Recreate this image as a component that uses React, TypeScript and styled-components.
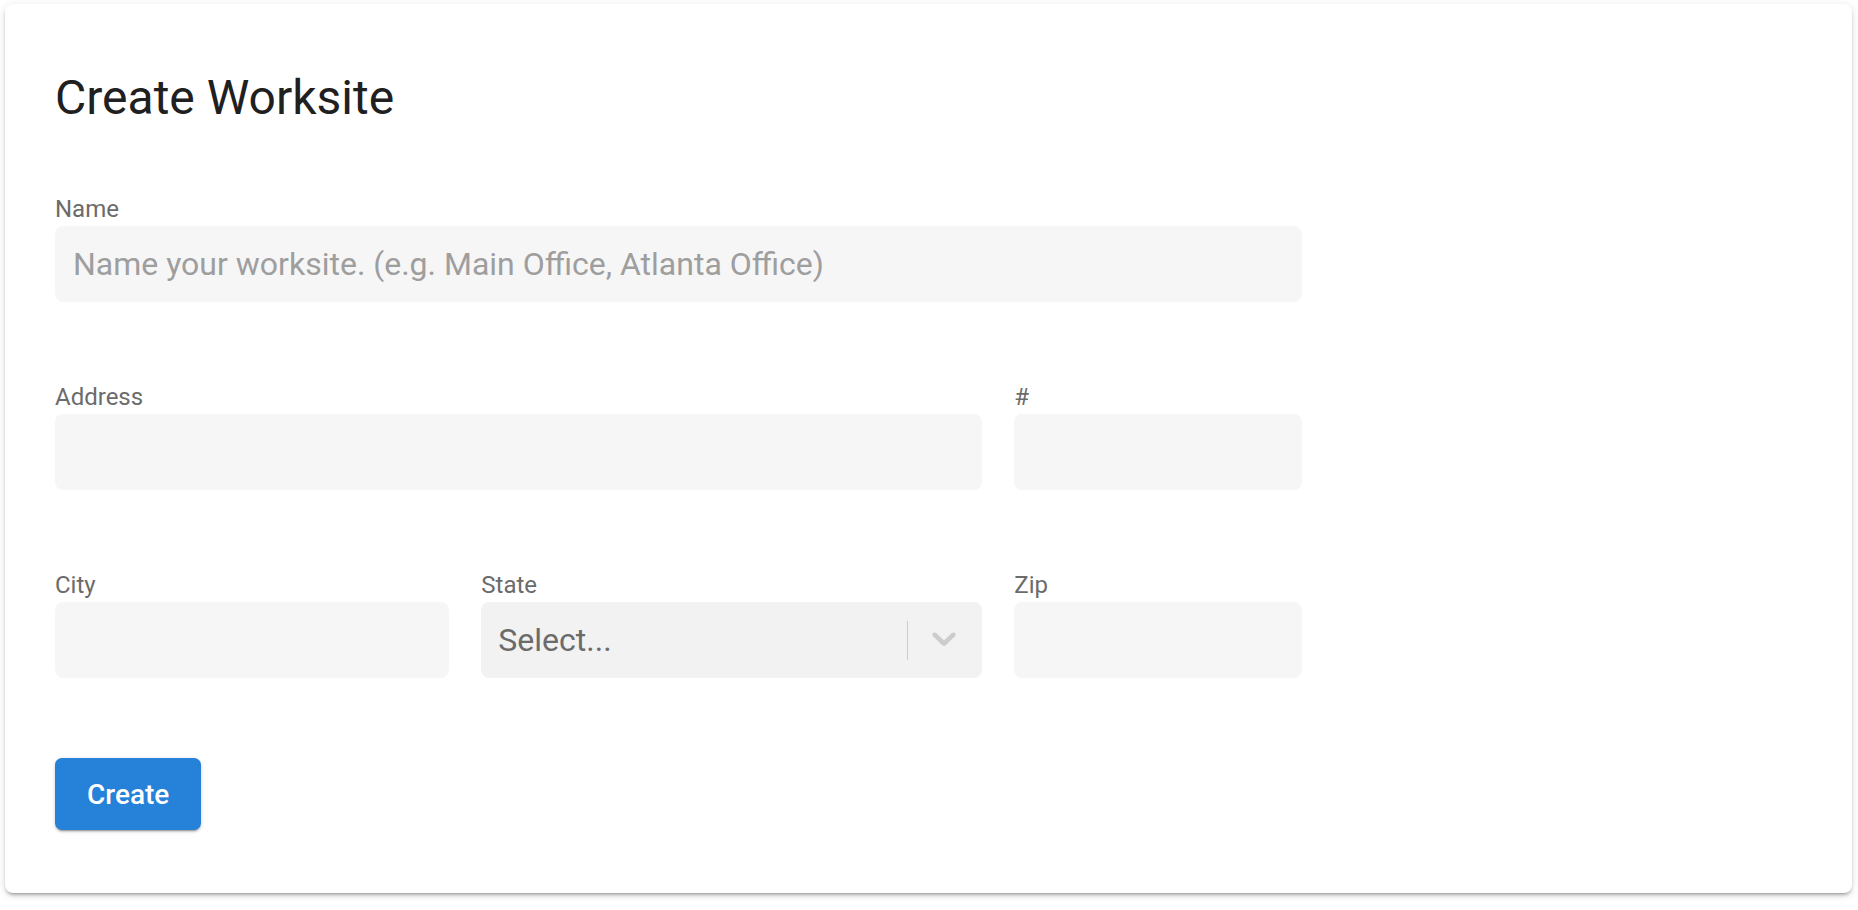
import React, { FunctionComponent } from "react";
import styled, { createGlobalStyle } from "styled-components";

const GlobalStyle = createGlobalStyle`
  body {
    margin: 0;
    background: #ffffff;
    font-family: Roboto, "Liberation Sans", sans-serif;
  }
`;

const Page = styled.div`
  padding: 4px 6px 17px 5px;
`;

const Card = styled.div`
  background: #ffffff;
  border-radius: 8px;
  padding: 66px 50px 63px;
  box-shadow: 0 4px 2px -3px rgba(0, 0, 0, 0.2), 0 3px 3px 0 rgba(0, 0, 0, 0.14),
    0 2px 8px 0 rgba(0, 0, 0, 0.12);
`;

const Title = styled.h1`
  margin: 0 0 69px;
  font-size: 48px;
  line-height: 56px;
  font-weight: 400;
  color: #202020;
`;

const Form = styled.div`
  display: grid;
  grid-template-columns: repeat(12, 1fr);
  column-gap: 32px;
  row-gap: 81px;
  max-width: 1247px;
`;

const Field = styled.div<{ $span: number }>`
  grid-column: span ${(p) => p.$span};
  display: flex;
  flex-direction: column;
`;

const Label = styled.label`
  font-size: 24px;
  line-height: 28px;
  color: #6b6b6b;
  margin-bottom: 3px;
`;

const Input = styled.input`
  box-sizing: border-box;
  height: 76px;
  width: 100%;
  border: none;
  outline: none;
  border-radius: 8px;
  background: #f6f6f6;
  padding: 0 18px;
  font-family: Roboto, "Liberation Sans", sans-serif;
  font-size: 32px;
  color: #333333;

  &::placeholder {
    color: #9e9e9e;
  }
`;

const SelectBox = styled.div`
  height: 76px;
  display: flex;
  align-items: center;
  border-radius: 8px;
  background: #f2f2f2;
`;

const SelectValue = styled.div`
  flex: 1;
  padding-left: 17px;
  font-size: 32px;
  color: #6b6b6b;
`;

const Separator = styled.span`
  width: 1px;
  height: 39px;
  background: #cccccc;
`;

const Indicator = styled.div`
  display: flex;
  align-items: center;
  padding: 0 26px 0 24px;
`;

const Actions = styled.div`
  margin-top: 80px;
`;

const Button = styled.button`
  height: 72px;
  padding: 0 32px;
  border: none;
  border-radius: 7px;
  background: #2681d9;
  color: #ffffff;
  font-family: Roboto, "Liberation Sans", sans-serif;
  font-size: 28px;
  font-weight: 500;
  box-shadow: 0 3px 1px -2px rgba(0, 0, 0, 0.2), 0 2px 2px 0 rgba(0, 0, 0, 0.14),
    0 1px 5px 0 rgba(0, 0, 0, 0.12);
  cursor: pointer;
`;

const Chevron = () => (
  <svg width="24" height="16" viewBox="4 7 12 8">
    <path
      fill="#cccccc"
      d="M4.516 7.548c0.436-0.446 1.043-0.481 1.576 0l3.908 3.747 3.908-3.747c0.533-0.481 1.141-0.446 1.574 0 0.436 0.445 0.408 1.197 0 1.615-0.406 0.418-4.695 4.502-4.695 4.502-0.217 0.223-0.502 0.335-0.787 0.335s-0.57-0.112-0.789-0.335c0 0-4.287-4.084-4.695-4.502s-0.436-1.17 0-1.615z"
    />
  </svg>
);

const App: FunctionComponent = () => {
  return (
    <Page>
      <GlobalStyle />
      <Card>
        <Title>Create Worksite</Title>
        <Form>
          <Field $span={12}>
            <Label>Name</Label>
            <Input placeholder="Name your worksite. (e.g. Main Office, Atlanta Office)" />
          </Field>
          <Field $span={9}>
            <Label>Address</Label>
            <Input />
          </Field>
          <Field $span={3}>
            <Label>#</Label>
            <Input />
          </Field>
          <Field $span={4}>
            <Label>City</Label>
            <Input />
          </Field>
          <Field $span={5}>
            <Label>State</Label>
            <SelectBox>
              <SelectValue>Select...</SelectValue>
              <Separator />
              <Indicator>
                <Chevron />
              </Indicator>
            </SelectBox>
          </Field>
          <Field $span={3}>
            <Label>Zip</Label>
            <Input />
          </Field>
        </Form>
        <Actions>
          <Button>Create</Button>
        </Actions>
      </Card>
    </Page>
  );
};

export default App;
